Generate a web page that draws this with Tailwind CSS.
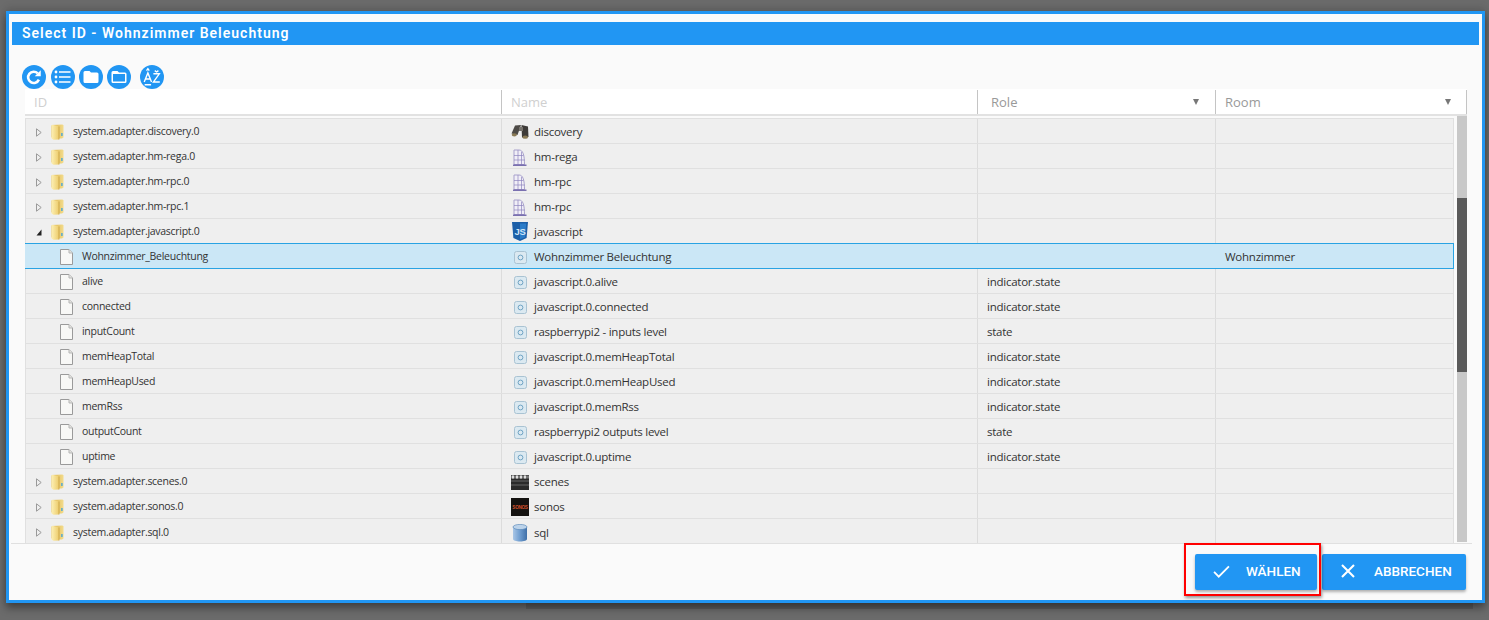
<!DOCTYPE html>
<html lang="de">
<head>
  <meta charset="UTF-8" />
  <title>Select ID - Wohnzimmer Beleuchtung</title>
  <meta name="viewport" content="width=device-width, initial-scale=1.0" />
  <script src="https://cdn.jsdelivr.net/npm/@tailwindcss/browser@4"></script>
</head>
<body class="relative bg-[#6b6b6b] h-[620px] overflow-hidden font-['Open_Sans',sans-serif]">

  <!-- icons -->
  <svg class="absolute w-0 h-0">
    <defs>
      <linearGradient id="fg" x1="0" x2="1" y1="0" y2="0"><stop offset="0" stop-color="#fdf0b4"/><stop offset="1" stop-color="#eccb6a"/></linearGradient>
      <linearGradient id="fb" x1="0" x2="1" y1="0" y2="0"><stop offset="0" stop-color="#d9ae45"/><stop offset="1" stop-color="#f3dc8c"/></linearGradient>
      <linearGradient id="db" x1="0" x2="1" y1="0" y2="0"><stop offset="0" stop-color="#a9c6e6"/><stop offset=".5" stop-color="#6e9ccf"/><stop offset="1" stop-color="#3f6fa8"/></linearGradient>
    </defs>
    <symbol id="folder" viewBox="0 0 13 16">
      <path d="M1 1 L11.5 0.5 L12.5 1.5 V13.5 L11 14.5 H1.5 L0.5 13 V2 Z" fill="url(#fb)"/>
      <path d="M0.5 1.5 L1.5 0.8 L7 2 L8 3 V15.5 L2.5 15.8 L0.5 14.5 Z" fill="url(#fg)"/>
      <path d="M8 2.5 V15.5" stroke="#c09a3a" stroke-width=".7"/>
      <rect x="10.2" y="9" width="1.4" height="3" fill="#4aa6d8"/>
    </symbol>
    <symbol id="file" viewBox="0 0 13 16">
      <path d="M.5 .5 H9 L12.5 4 V15.5 H.5 Z" fill="#f8f8f6" stroke="#9a9a9a"/>
      <path d="M9 .5 V4 H12.5" fill="#e4e4e0" stroke="#b5b5b5"/>
    </symbol>
    <symbol id="state" viewBox="0 0 13 13">
      <rect x=".5" y=".5" width="12" height="12" rx="2" fill="#dbe9f1" stroke="#a9c3d3"/>
      <circle cx="6.5" cy="6.5" r="2.4" fill="none" stroke="#6fa3c4"/>
    </symbol>
    <symbol id="hm" viewBox="0 0 14 17">
      <path d="M1 15.5 V1 H6 C10 1 11.5 6 11.5 15.5 Z" fill="#f1eff7" stroke="#a8a1cc"/>
      <path d="M1 6.5 H10.5 M1 11 H11.5 M5 1 V15.5 M8.5 3 V15.5" stroke="#8d84bd" stroke-width=".7" fill="none"/>
      <path d="M0 16.2 H13.5" stroke="#5d51a0" stroke-width="1.2"/>
    </symbol>
  </svg>

  <!-- panel of the page behind the dialog -->
  <div class="absolute top-[600px] left-[526px] w-[947px] h-[9px] bg-[#5c5c5c]"></div>

  <div class="relative pt-[11px] pl-[6px]">
    <div class="w-[1479px] h-[592px] border-[3px] border-[#2196f3] bg-[#fafafa] shadow-[0_5px_8px_rgba(0,0,0,0.4),0_-3px_8px_rgba(0,0,0,0.12)] flex flex-col">

      <div class="mt-2 mx-[3px] h-[23px] bg-[#2196f3] text-white font-semibold text-[14px] tracking-[1px] leading-[22px] pl-[10px] font-['Roboto',sans-serif]">Select ID - Wohnzimmer Beleuchtung</div>

      <!-- toolbar -->
      <div class="mt-5 h-6 pl-[13px] flex">
        <button class="w-6 h-6 rounded-full bg-[#2196f3] flex items-center justify-center">
          <svg viewBox="0 0 24 24" class="w-[18px] h-[18px]" fill="none" stroke="#fff" stroke-width="3.4"><path d="M18.5 15.5A7.5 7.5 0 1 1 17 7.2"/><path d="M21 3v8h-8z" fill="#fff" stroke="none"/></svg>
        </button>
        <button class="ml-[5px] w-6 h-6 rounded-full bg-[#2196f3] flex items-center justify-center">
          <svg viewBox="0 0 18 18" class="w-[18px] h-[18px]" stroke="#fff" stroke-width="1.4" fill="#fff"><circle cx="2" cy="4" r=".7"/><circle cx="2" cy="9" r=".7"/><circle cx="2" cy="14" r=".7"/><path d="M5 4H16.5M5 9H16.5M5 14H16.5"/></svg>
        </button>
        <button class="ml-1 w-6 h-6 rounded-full bg-[#2196f3] flex items-center justify-center">
          <svg viewBox="0 0 24 24" class="w-[18px] h-[18px]" fill="#fff"><path d="M10 4H4a2 2 0 0 0-2 2v12a2 2 0 0 0 2 2h16a2 2 0 0 0 2-2V8a2 2 0 0 0-2-2h-8z"/></svg>
        </button>
        <button class="ml-1 w-6 h-6 rounded-full bg-[#2196f3] flex items-center justify-center">
          <svg viewBox="0 0 24 24" class="w-[18px] h-[18px]" fill="#fff"><path d="M20 6h-8l-2-2H4a2 2 0 0 0-2 2v12a2 2 0 0 0 2 2h16a2 2 0 0 0 2-2V8a2 2 0 0 0-2-2zm0 12H4V8h16z"/></svg>
        </button>
        <button class="ml-[9px] w-6 h-6 rounded-full bg-[#2196f3] flex items-center justify-center">
          <svg viewBox="0 0 24 24" class="w-[22px] h-[22px]" fill="none" stroke="#fff" stroke-width="1.5"><path d="M3.5 17.5L7.5 7.5l4 10M5 14.2h5M13.5 8.5H20l-6.5 9H20.5M4 20.5h7M6 5l1.5-2L9 5M15 5l2 1.5L19 5"/></svg>
        </button>
      </div>

      <!-- table -->
      <div class="ml-4 w-[1442px]">
        <div class="h-[27px] pt-px bg-white border-b-2 border-[#e2e2e2] flex text-[13px] leading-[24px]">
          <div class="w-[477px] pl-[9px] text-[#d0d0d0] border-r border-[#c4c4c4]">ID</div>
          <div class="w-[476px] pl-[9px] text-[#d0d0d0] border-r border-[#c4c4c4]">Name</div>
          <div class="w-[238px] pl-[13px] pr-[16px] text-[#999] border-r border-[#c4c4c4] flex justify-between items-center">Role <span class="w-0 h-0 border-x-[3px] border-x-transparent border-t-[6px] border-t-[#777]"></span></div>
          <div class="w-[251px] pl-[9px] pr-[15px] text-[#999] border-r border-[#c4c4c4] flex justify-between items-center">Room <span class="w-0 h-0 border-x-[3px] border-x-transparent border-t-[6px] border-t-[#777]"></span></div>
        </div>
        <div class="flex">
          <div class="w-[1429px] h-[427px] pt-[2px] text-[#333] overflow-hidden">
            <div class="border-t border-[#e0e0e0] border-l border-r bg-[#efefef]">

              <div class="h-[25px] flex border-b border-[#e0e0e0] items-center">
                <div class="w-[476px] h-full pt-[2px] flex items-center border-r border-[#dcdcdc] text-[10.5px] tracking-[-0.28px]"><svg class="ml-[10px] w-[6px] h-[9px]" viewBox="0 0 6 9"><path d="M.5.8 5.2 4.5.5 8.2Z" fill="none" stroke="#999"/></svg><svg class="ml-[9px] w-[13px] h-4"><use href="#folder"/></svg><span class="ml-[9px]">system.adapter.discovery.0</span></div>
                <div class="w-[476px] h-full pt-[2px] flex items-center border-r border-[#dcdcdc] text-[11.5px] tracking-[-0.25px]"><svg class="ml-[9px] w-[18px] h-[16px]" viewBox="0 0 18 16"><path d="M4 1.5 10 1 6.5 11 .5 9.5Z" fill="#4d4a46"/><path d="M10.5 1 17 2.5 17.5 13 11 13.5Z" fill="#3e3b38"/><path d="M8 3h4v4H8z" fill="#77736d"/><ellipse cx="3.3" cy="10.8" rx="2.6" ry="1.6" fill="#8a7a55"/><ellipse cx="14.2" cy="13.2" rx="2.8" ry="1.6" fill="#8a7a55"/></svg><span class="ml-[5px]">discovery</span></div>
                <div class="w-[238px] h-full border-r border-[#dcdcdc]"></div>
              </div>
              <div class="h-[25px] flex border-b border-[#e0e0e0] items-center">
                <div class="w-[476px] h-full pt-[2px] flex items-center border-r border-[#dcdcdc] text-[10.5px] tracking-[-0.28px]"><svg class="ml-[10px] w-[6px] h-[9px]" viewBox="0 0 6 9"><path d="M.5.8 5.2 4.5.5 8.2Z" fill="none" stroke="#999"/></svg><svg class="ml-[9px] w-[13px] h-4"><use href="#folder"/></svg><span class="ml-[9px]">system.adapter.hm-rega.0</span></div>
                <div class="w-[476px] h-full pt-[2px] flex items-center border-r border-[#dcdcdc] text-[11.5px] tracking-[-0.25px]"><svg class="ml-[11px] w-[14px] h-[17px]"><use href="#hm"/></svg><span class="ml-[7px]">hm-rega</span></div>
                <div class="w-[238px] h-full border-r border-[#dcdcdc]"></div>
              </div>
              <div class="h-[25px] flex border-b border-[#e0e0e0] items-center">
                <div class="w-[476px] h-full pt-[2px] flex items-center border-r border-[#dcdcdc] text-[10.5px] tracking-[-0.28px]"><svg class="ml-[10px] w-[6px] h-[9px]" viewBox="0 0 6 9"><path d="M.5.8 5.2 4.5.5 8.2Z" fill="none" stroke="#999"/></svg><svg class="ml-[9px] w-[13px] h-4"><use href="#folder"/></svg><span class="ml-[9px]">system.adapter.hm-rpc.0</span></div>
                <div class="w-[476px] h-full pt-[2px] flex items-center border-r border-[#dcdcdc] text-[11.5px] tracking-[-0.25px]"><svg class="ml-[11px] w-[14px] h-[17px]"><use href="#hm"/></svg><span class="ml-[7px]">hm-rpc</span></div>
                <div class="w-[238px] h-full border-r border-[#dcdcdc]"></div>
              </div>
              <div class="h-[25px] flex border-b border-[#e0e0e0] items-center">
                <div class="w-[476px] h-full pt-[2px] flex items-center border-r border-[#dcdcdc] text-[10.5px] tracking-[-0.28px]"><svg class="ml-[10px] w-[6px] h-[9px]" viewBox="0 0 6 9"><path d="M.5.8 5.2 4.5.5 8.2Z" fill="none" stroke="#999"/></svg><svg class="ml-[9px] w-[13px] h-4"><use href="#folder"/></svg><span class="ml-[9px]">system.adapter.hm-rpc.1</span></div>
                <div class="w-[476px] h-full pt-[2px] flex items-center border-r border-[#dcdcdc] text-[11.5px] tracking-[-0.25px]"><svg class="ml-[11px] w-[14px] h-[17px]"><use href="#hm"/></svg><span class="ml-[7px]">hm-rpc</span></div>
                <div class="w-[238px] h-full border-r border-[#dcdcdc]"></div>
              </div>
              <div class="h-[25px] flex border-b border-[#e0e0e0] items-center">
                <div class="w-[476px] h-full pt-[2px] flex items-center border-r border-[#dcdcdc] text-[10.5px] tracking-[-0.28px]"><svg class="ml-[10px] w-[6px] h-[9px]" viewBox="0 0 6 9"><path d="M5.5 1.5V7.5H.5Z" fill="#222"/></svg><svg class="ml-[9px] w-[13px] h-4"><use href="#folder"/></svg><span class="ml-[9px]">system.adapter.javascript.0</span></div>
                <div class="w-[476px] h-full flex items-center border-r border-[#dcdcdc] text-[11.5px] tracking-[-0.25px]"><svg class="ml-[10px] w-4 h-[19px]" viewBox="0 0 16 19"><path d="M0 0H16L14.6 16 8 19 1.4 16Z" fill="#1c5fa8"/><path d="M8 1.5H14.2L13 15.2 8 17.3Z" fill="#2b7cc9"/><text x="8" y="12.5" text-anchor="middle" font-size="9.5" font-weight="700" fill="#cfe6f7" font-family="Liberation Sans">JS</text></svg><span class="ml-[6px] pt-[2px]">javascript</span></div>
                <div class="w-[238px] h-full border-r border-[#dcdcdc]"></div>
              </div>

              <!-- selected -->
              <div class="relative -mt-px -ml-[2px] -mr-px h-[26px] flex border border-[#29a3e3] bg-[#cbe7f6] items-center">
                <div class="w-[476px] h-full pt-[2px] flex items-center text-[10.5px] tracking-[-0.28px]"><svg class="ml-[35px] w-[13px] h-4"><use href="#file"/></svg><span class="ml-[9px]">Wohnzimmer_Beleuchtung</span></div>
                <div class="w-[476px] h-full pt-[2px] flex items-center text-[11.5px] tracking-[-0.25px]"><svg class="ml-[13px] w-[13px] h-[13px]"><use href="#state"/></svg><span class="ml-[7px]">Wohnzimmer Beleuchtung</span></div>
                <div class="w-[238px] h-full"></div>
                <div class="pl-[10px] pt-[2px] text-[11.5px] tracking-[-0.25px]">Wohnzimmer</div>
              </div>

              <div class="h-[25px] flex border-b border-[#e0e0e0] items-center">
                <div class="w-[476px] h-full pt-[2px] flex items-center border-r border-[#dcdcdc] text-[10.5px] tracking-[-0.28px]"><svg class="ml-[34px] w-[13px] h-4"><use href="#file"/></svg><span class="ml-[9px]">alive</span></div>
                <div class="w-[476px] h-full pt-[2px] flex items-center border-r border-[#dcdcdc] text-[11.5px] tracking-[-0.25px]"><svg class="ml-[12px] w-[13px] h-[13px]"><use href="#state"/></svg><span class="ml-[7px]">javascript.0.alive</span></div>
                <div class="w-[238px] h-full pt-[2px] flex items-center border-r border-[#dcdcdc] pl-[9px] text-[11.5px] tracking-[-0.25px]">indicator.state</div>
              </div>
              <div class="h-[25px] flex border-b border-[#e0e0e0] items-center">
                <div class="w-[476px] h-full pt-[2px] flex items-center border-r border-[#dcdcdc] text-[10.5px] tracking-[-0.28px]"><svg class="ml-[34px] w-[13px] h-4"><use href="#file"/></svg><span class="ml-[9px]">connected</span></div>
                <div class="w-[476px] h-full pt-[2px] flex items-center border-r border-[#dcdcdc] text-[11.5px] tracking-[-0.25px]"><svg class="ml-[12px] w-[13px] h-[13px]"><use href="#state"/></svg><span class="ml-[7px]">javascript.0.connected</span></div>
                <div class="w-[238px] h-full pt-[2px] flex items-center border-r border-[#dcdcdc] pl-[9px] text-[11.5px] tracking-[-0.25px]">indicator.state</div>
              </div>
              <div class="h-[25px] flex border-b border-[#e0e0e0] items-center">
                <div class="w-[476px] h-full pt-[2px] flex items-center border-r border-[#dcdcdc] text-[10.5px] tracking-[-0.28px]"><svg class="ml-[34px] w-[13px] h-4"><use href="#file"/></svg><span class="ml-[9px]">inputCount</span></div>
                <div class="w-[476px] h-full pt-[2px] flex items-center border-r border-[#dcdcdc] text-[11.5px] tracking-[-0.25px]"><svg class="ml-[12px] w-[13px] h-[13px]"><use href="#state"/></svg><span class="ml-[7px]">raspberrypi2 - inputs level</span></div>
                <div class="w-[238px] h-full pt-[2px] flex items-center border-r border-[#dcdcdc] pl-[9px] text-[11.5px] tracking-[-0.25px]">state</div>
              </div>
              <div class="h-[25px] flex border-b border-[#e0e0e0] items-center">
                <div class="w-[476px] h-full pt-[2px] flex items-center border-r border-[#dcdcdc] text-[10.5px] tracking-[-0.28px]"><svg class="ml-[34px] w-[13px] h-4"><use href="#file"/></svg><span class="ml-[9px]">memHeapTotal</span></div>
                <div class="w-[476px] h-full pt-[2px] flex items-center border-r border-[#dcdcdc] text-[11.5px] tracking-[-0.25px]"><svg class="ml-[12px] w-[13px] h-[13px]"><use href="#state"/></svg><span class="ml-[7px]">javascript.0.memHeapTotal</span></div>
                <div class="w-[238px] h-full pt-[2px] flex items-center border-r border-[#dcdcdc] pl-[9px] text-[11.5px] tracking-[-0.25px]">indicator.state</div>
              </div>
              <div class="h-[25px] flex border-b border-[#e0e0e0] items-center">
                <div class="w-[476px] h-full pt-[2px] flex items-center border-r border-[#dcdcdc] text-[10.5px] tracking-[-0.28px]"><svg class="ml-[34px] w-[13px] h-4"><use href="#file"/></svg><span class="ml-[9px]">memHeapUsed</span></div>
                <div class="w-[476px] h-full pt-[2px] flex items-center border-r border-[#dcdcdc] text-[11.5px] tracking-[-0.25px]"><svg class="ml-[12px] w-[13px] h-[13px]"><use href="#state"/></svg><span class="ml-[7px]">javascript.0.memHeapUsed</span></div>
                <div class="w-[238px] h-full pt-[2px] flex items-center border-r border-[#dcdcdc] pl-[9px] text-[11.5px] tracking-[-0.25px]">indicator.state</div>
              </div>
              <div class="h-[25px] flex border-b border-[#e0e0e0] items-center">
                <div class="w-[476px] h-full pt-[2px] flex items-center border-r border-[#dcdcdc] text-[10.5px] tracking-[-0.28px]"><svg class="ml-[34px] w-[13px] h-4"><use href="#file"/></svg><span class="ml-[9px]">memRss</span></div>
                <div class="w-[476px] h-full pt-[2px] flex items-center border-r border-[#dcdcdc] text-[11.5px] tracking-[-0.25px]"><svg class="ml-[12px] w-[13px] h-[13px]"><use href="#state"/></svg><span class="ml-[7px]">javascript.0.memRss</span></div>
                <div class="w-[238px] h-full pt-[2px] flex items-center border-r border-[#dcdcdc] pl-[9px] text-[11.5px] tracking-[-0.25px]">indicator.state</div>
              </div>
              <div class="h-[25px] flex border-b border-[#e0e0e0] items-center">
                <div class="w-[476px] h-full pt-[2px] flex items-center border-r border-[#dcdcdc] text-[10.5px] tracking-[-0.28px]"><svg class="ml-[34px] w-[13px] h-4"><use href="#file"/></svg><span class="ml-[9px]">outputCount</span></div>
                <div class="w-[476px] h-full pt-[2px] flex items-center border-r border-[#dcdcdc] text-[11.5px] tracking-[-0.25px]"><svg class="ml-[12px] w-[13px] h-[13px]"><use href="#state"/></svg><span class="ml-[7px]">raspberrypi2 outputs level</span></div>
                <div class="w-[238px] h-full pt-[2px] flex items-center border-r border-[#dcdcdc] pl-[9px] text-[11.5px] tracking-[-0.25px]">state</div>
              </div>
              <div class="h-[25px] flex border-b border-[#e0e0e0] items-center">
                <div class="w-[476px] h-full pt-[2px] flex items-center border-r border-[#dcdcdc] text-[10.5px] tracking-[-0.28px]"><svg class="ml-[34px] w-[13px] h-4"><use href="#file"/></svg><span class="ml-[9px]">uptime</span></div>
                <div class="w-[476px] h-full pt-[2px] flex items-center border-r border-[#dcdcdc] text-[11.5px] tracking-[-0.25px]"><svg class="ml-[12px] w-[13px] h-[13px]"><use href="#state"/></svg><span class="ml-[7px]">javascript.0.uptime</span></div>
                <div class="w-[238px] h-full pt-[2px] flex items-center border-r border-[#dcdcdc] pl-[9px] text-[11.5px] tracking-[-0.25px]">indicator.state</div>
              </div>

              <div class="h-[25px] flex border-b border-[#e0e0e0] items-center">
                <div class="w-[476px] h-full pt-[2px] flex items-center border-r border-[#dcdcdc] text-[10.5px] tracking-[-0.28px]"><svg class="ml-[10px] w-[6px] h-[9px]" viewBox="0 0 6 9"><path d="M.5.8 5.2 4.5.5 8.2Z" fill="none" stroke="#999"/></svg><svg class="ml-[9px] w-[13px] h-4"><use href="#folder"/></svg><span class="ml-[9px]">system.adapter.scenes.0</span></div>
                <div class="w-[476px] h-full pt-[2px] flex items-center border-r border-[#dcdcdc] text-[11.5px] tracking-[-0.25px]"><svg class="ml-[9px] w-[18px] h-[15px]" viewBox="0 0 18 15"><rect width="18" height="15" fill="#2a2a2a"/><path d="M0 .5h18v3H0z" fill="#777"/><path d="M1 .5h2v3H1zM5 .5h2v3H5zM9 .5h2v3H9zM13 .5h2v3h-2z" fill="#ddd"/><path d="M0 6h18M0 10h18" stroke="#666"/></svg><span class="ml-[5px]">scenes</span></div>
                <div class="w-[238px] h-full border-r border-[#dcdcdc]"></div>
              </div>
              <div class="h-[25px] flex border-b border-[#e0e0e0] items-center">
                <div class="w-[476px] h-full pt-[2px] flex items-center border-r border-[#dcdcdc] text-[10.5px] tracking-[-0.28px]"><svg class="ml-[10px] w-[6px] h-[9px]" viewBox="0 0 6 9"><path d="M.5.8 5.2 4.5.5 8.2Z" fill="none" stroke="#999"/></svg><svg class="ml-[9px] w-[13px] h-4"><use href="#folder"/></svg><span class="ml-[9px]">system.adapter.sonos.0</span></div>
                <div class="w-[476px] h-full pt-[2px] flex items-center border-r border-[#dcdcdc] text-[11.5px] tracking-[-0.25px]"><svg class="ml-[9px] w-[18px] h-[18px]" viewBox="0 0 18 18"><rect width="18" height="18" fill="#141210"/><text x="9" y="10.5" text-anchor="middle" font-size="4.6" font-weight="700" fill="#d2502a" font-family="Liberation Sans">SONOS</text></svg><span class="ml-[5px]">sonos</span></div>
                <div class="w-[238px] h-full border-r border-[#dcdcdc]"></div>
              </div>
              <div class="h-[25px] flex items-center">
                <div class="w-[476px] h-full pt-[2px] flex items-center border-r border-[#dcdcdc] text-[10.5px] tracking-[-0.28px]"><svg class="ml-[10px] w-[6px] h-[9px]" viewBox="0 0 6 9"><path d="M.5.8 5.2 4.5.5 8.2Z" fill="none" stroke="#999"/></svg><svg class="ml-[9px] w-[13px] h-4"><use href="#folder"/></svg><span class="ml-[9px]">system.adapter.sql.0</span></div>
                <div class="w-[476px] h-full pt-[2px] flex items-center border-r border-[#dcdcdc] text-[11.5px] tracking-[-0.25px]"><svg class="ml-[10px] w-4 h-[18px]" viewBox="0 0 16 18"><path d="M1 3V15C1 16.5 4 17.5 8 17.5S15 16.5 15 15V3Z" fill="url(#db)"/><ellipse cx="8" cy="3" rx="7" ry="2.6" fill="#bcd3ea" stroke="#5f8cbc" stroke-width=".7"/></svg><span class="ml-[6px]">sql</span></div>
                <div class="w-[238px] h-full border-r border-[#dcdcdc]"></div>
              </div>
            </div>
          </div>
          <!-- scrollbar -->
          <div class="ml-[3px] w-[10px] h-[426px] bg-[#c8c8c8] pt-[82px]">
            <div class="h-[174px] bg-[#5a5a5a]"></div>
          </div>
        </div>
      </div>

      <!-- footer -->
      <div class="ml-[2px] w-[1461px] border-t border-[#e0e0e0] pt-[10px] flex justify-end gap-[5px] pr-[6px] font-['Roboto',sans-serif] text-[13.5px] font-medium text-white">
        <div class="relative">
          <button class="w-[122px] h-9 pb-[2px] bg-[#2196f3] rounded-[2px] shadow-[0_2px_3px_rgba(0,0,0,0.3)] flex items-center">
            <svg viewBox="0 0 18 14" class="ml-[18px] w-[17px] h-[13px]" fill="none" stroke="#fff" stroke-width="2"><path d="M1 7.5 6 12.5 17 1.5"/></svg>
            <span class="ml-[16px]">WÄHLEN</span>
          </button>
          <div class="absolute top-[-11px] -bottom-[6px] -left-[11px] -right-1 border-2 border-[#ff0000] shadow-[1px_2px_3px_rgba(0,0,0,0.4)] pointer-events-none"></div>
        </div>
        <button class="w-[144px] h-9 pb-[2px] bg-[#2196f3] rounded-[2px] shadow-[0_2px_3px_rgba(0,0,0,0.3)] flex items-center">
          <svg viewBox="0 0 14 14" class="ml-[19px] w-[14px] h-[14px]" fill="none" stroke="#fff" stroke-width="2.1"><path d="M1 1 13 13M13 1 1 13"/></svg>
          <span class="ml-[19px]">ABBRECHEN</span>
        </button>
      </div>
    </div>
  </div>

</body>
</html>
